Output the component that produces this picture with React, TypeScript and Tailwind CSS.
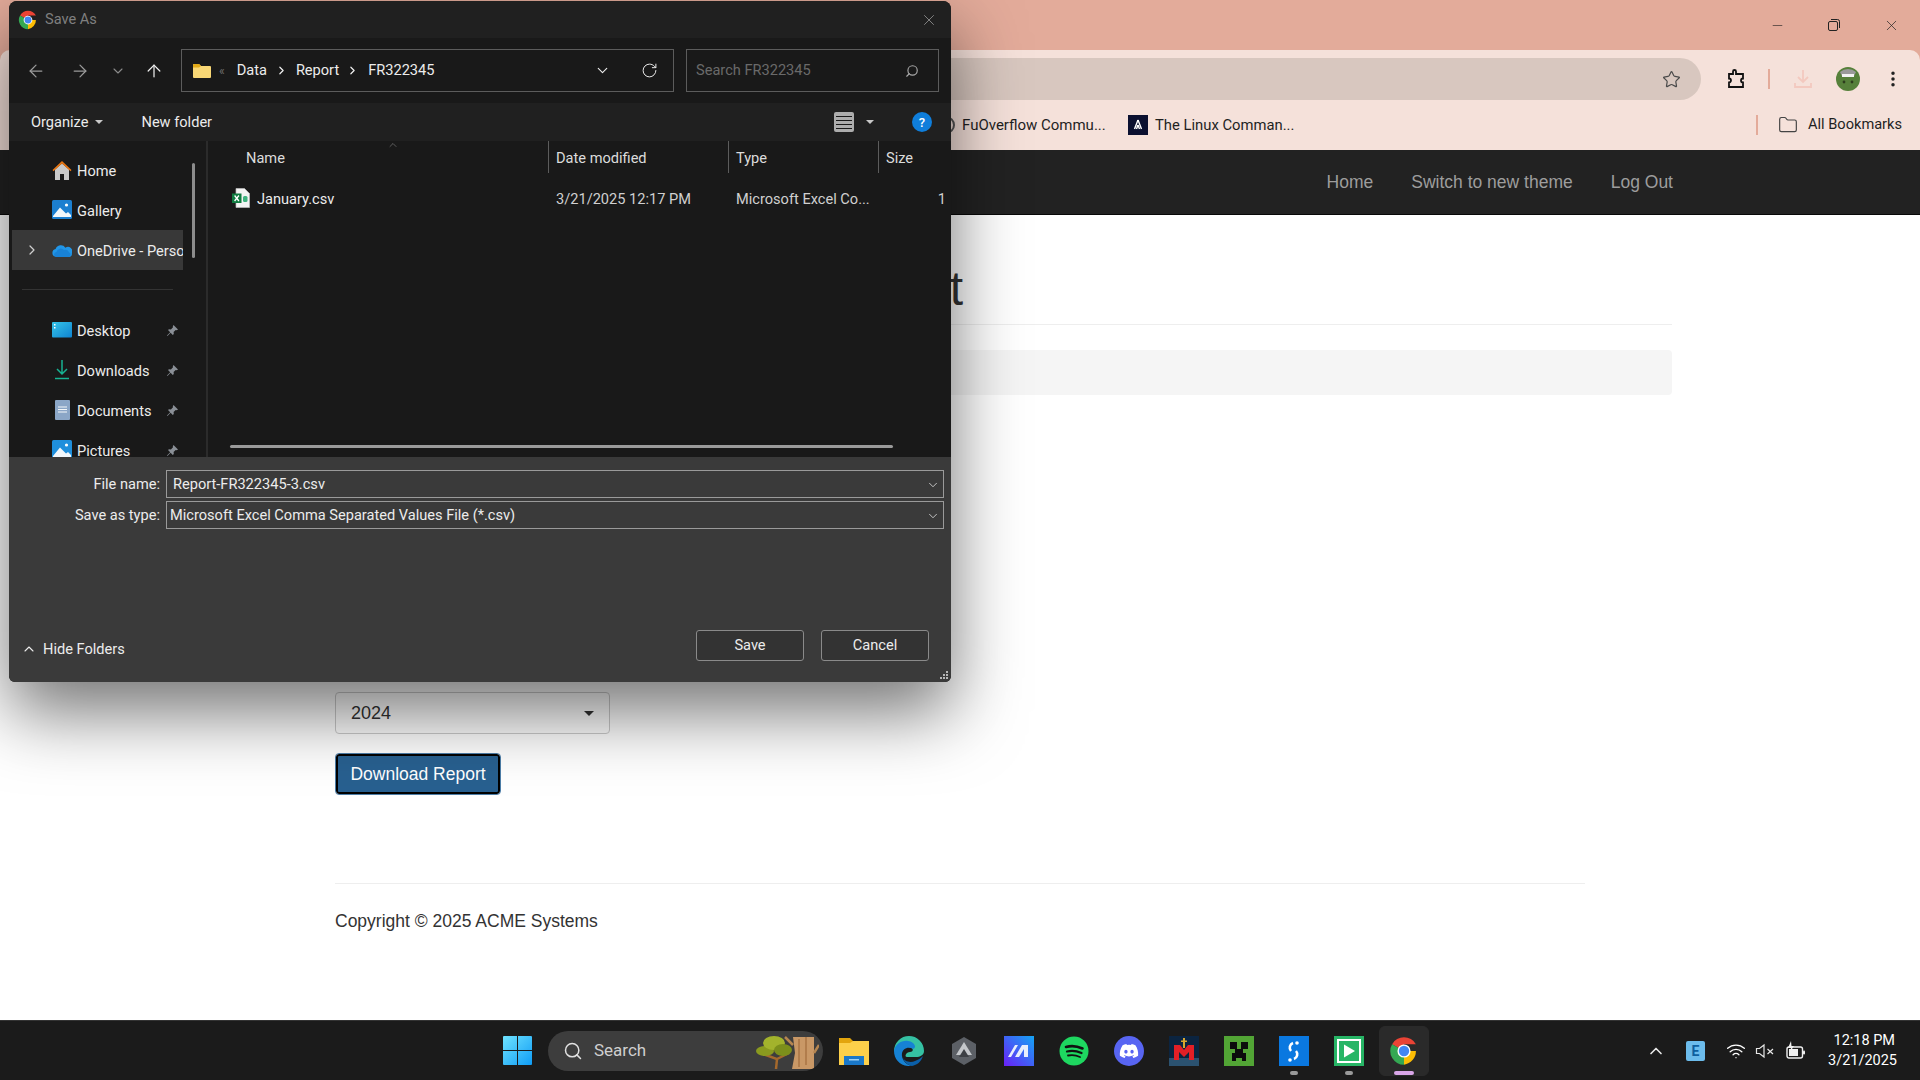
import { ArrowLeft, ArrowRight, ArrowUp, ChevronDown, ChevronRight, ChevronUp, Folder, Minus, MoreVertical, RotateCw, Search, Star, Wifi, X } from "lucide-react";
import { FaDiscord } from "react-icons/fa";

function ChromeLogo({ size }: { size: number }) {
  return (
    <svg width={size} height={size} viewBox="0 0 48 48" className="shrink-0">
      <path d="M24 24L4.95 13A22 22 0 0 1 43.05 13H24Z" fill="#ea4335" />
      <path d="M24 24L4.95 13A22 22 0 0 0 24 46Z" fill="#34a853" />
      <path d="M24 24H43.05A22 22 0 0 1 24 46Z" fill="#fbbc04" />
      <circle cx="24" cy="24" r="10.5" fill="#fff" />
      <circle cx="24" cy="24" r="8.3" fill="#4285f4" />
    </svg>
  );
}

function PinIcon() {
  return (
    <svg width="13" height="13" viewBox="0 0 13 13" className="shrink-0">
      <path d="M7.5 1L12 5.5L10.8 6.2L9.7 6L7.6 8.1L7.8 10L6.8 11L4.6 8.7L1.5 12L1 11.5L4.2 8.3L2 6.1L3 5.2L4.9 5.4L7 3.3L6.8 2.2Z" fill="#8a8f96" />
    </svg>
  );
}

function HomeIcon() {
  return (
    <svg width="20" height="20" viewBox="0 0 20 20">
      <path d="M3 9.5L10 3.5L17 9.5V20H12V14H8V20H3Z" fill="#c9c9c9" />
      <path d="M0.5 10L10 1L19.5 10L18.5 11.3L10 3.6L1.5 11.3Z" fill="#e87511" />
    </svg>
  );
}

function GalleryIcon({ clip }: { clip?: boolean }) {
  return (
    <svg width="20" height="20" viewBox="0 0 20 20">
      <rect x="0" y="0" width="20" height="19" rx="1.5" fill={clip ? "#1f8fdc" : "#1c7fd0"} />
      <circle cx="14.5" cy="5" r="1.6" fill="#fff" />
      <path d="M1 16L8 7.5L14 13.5L16 12L19 15V17H1Z" fill="#f2f7fb" />
    </svg>
  );
}

function CloudIcon() {
  return (
    <svg width="20" height="13" viewBox="0 0 20 13">
      <path d="M4 13A4 4 0 0 1 3.6 5.1A5.5 5.5 0 0 1 13.4 3.7A4.4 4.4 0 0 1 19.9 9.2A3.4 3.4 0 0 1 17 13Z" fill="#2196e8" />
      <path d="M4 13A2.6 2.6 0 0 1 4.4 7.9A4.4 4.4 0 0 1 12 6A3.6 3.6 0 0 1 17 8.2A2.6 2.6 0 0 1 17 13Z" fill="#1273c9" opacity="0.55" />
    </svg>
  );
}

function DesktopIcon() {
  return (
    <svg width="20" height="16" viewBox="0 0 20 16">
      <defs>
        <linearGradient id="desk" x1="0" y1="0" x2="1" y2="1">
          <stop offset="0" stopColor="#35c4e8" />
          <stop offset="1" stopColor="#0f83d0" />
        </linearGradient>
      </defs>
      <rect width="20" height="15.5" rx="1" fill="url(#desk)" />
      <rect x="2" y="2" width="1.5" height="1.5" fill="#fff" />
      <rect x="2" y="5" width="1.5" height="1.5" fill="#fff" />
    </svg>
  );
}

function DownloadsIcon() {
  return (
    <svg width="16" height="20" viewBox="0 0 16 20" fill="none" stroke="#17b393" strokeWidth="1.5">
      <path d="M8 0V13.5M3 9L8 14L13 9" />
      <path d="M1 18.5H15" />
    </svg>
  );
}

function DocumentsIcon() {
  return (
    <svg width="15" height="20" viewBox="0 0 15 20">
      <rect width="15" height="20" rx="1" fill="#8ba6c7" />
      <path d="M3 7H12M3 9.5H12M3 12H12" stroke="#f4f7fa" strokeWidth="1" />
    </svg>
  );
}

function ExcelFile() {
  return (
    <svg width="18" height="20" viewBox="0 0 18 20" className="shrink-0">
      <path d="M4 0.5H12.5L17.5 5.5V19.5H4Z" fill="#f3f3f3" stroke="#bdbdbd" strokeWidth="0.7" />
      <rect x="0" y="5.5" width="9.5" height="9.5" fill="#107c41" />
      <path d="M2.6 7.5L6.9 13M6.9 7.5L2.6 13" stroke="#fff" strokeWidth="1.3" />
      <rect x="11" y="8" width="4.5" height="6" rx="1.5" fill="#3fb27f" />
    </svg>
  );
}

function SideRow({ icon, label, pinned, selected, expandable }: { icon: React.ReactNode; label: string; pinned?: boolean; selected?: boolean; expandable?: boolean }) {
  return (
    <div className={`ml-[3px] flex h-10 w-[171px] items-center overflow-hidden ${selected ? "bg-[#383838]" : ""}`}>
      <div className="flex w-[40px] shrink-0 justify-center">
        {expandable && <ChevronRight size={16} strokeWidth={1.8} className="text-[#d0d0d0]" />}
      </div>
      <div className="flex w-5 shrink-0 justify-center">{icon}</div>
      <span className="ml-[5px] mt-[3px] whitespace-nowrap">{label}</span>
      {pinned && (
        <span className="ml-auto mr-[4px]">
          <PinIcon />
        </span>
      )}
    </div>
  );
}

function SaveAsDialog() {
  return (
    <div className="absolute left-[9px] top-[1px] flex h-[681px] w-[942px] flex-col overflow-hidden rounded-t-lg rounded-b-md bg-[#191919] font-['Roboto',sans-serif] text-[14.6px] text-[#ececec] shadow-[0_30px_70px_rgba(0,0,0,0.55)]">
      <div className="flex h-[37px] shrink-0 items-center bg-[#202020] pl-[9px] pr-[13px]">
        <ChromeLogo size={20} />
        <span className="ml-[7px] text-[#7f7f7f]">Save As</span>
        <X size={18} strokeWidth={1} className="ml-auto text-[#a0a0a0]" />
      </div>

      <div className="flex h-[65px] shrink-0 items-center">
        <ArrowLeft size={20} strokeWidth={1.5} className="ml-[17px] text-[#9a9a9a]" />
        <ArrowRight size={20} strokeWidth={1.5} className="ml-[24px] text-[#9a9a9a]" />
        <ChevronDown size={16} strokeWidth={1.6} className="ml-[20px] text-[#8a8a8a]" />
        <ArrowUp size={20} strokeWidth={1.5} className="ml-[18px] text-[#ececec]" />
        <div className="ml-[17px] flex h-[43px] w-[493px] items-center border border-[#5c5c5c] pl-[11px]">
          <svg width="18" height="14" viewBox="0 0 18 14">
            <path d="M0 1A1 1 0 0 1 1 0H6L8 2H17A1 1 0 0 1 18 3V13A1 1 0 0 1 17 14H1A1 1 0 0 1 0 13Z" fill="#f8d775" />
            <path d="M0 1A1 1 0 0 1 1 0H6L8 2L6 3.5H0Z" fill="#e2a917" />
          </svg>
          <span className="ml-[8px] text-[12px] leading-none text-[#6e6e6e]">«</span>
          <span className="ml-[12px]">Data</span>
          <ChevronRight size={13} strokeWidth={2.2} className="ml-[8px] text-[#f0f0f0]" />
          <span className="ml-[8px]">Report</span>
          <ChevronRight size={13} strokeWidth={2.2} className="ml-[7px] text-[#f0f0f0]" />
          <span className="ml-[9px]">FR322345</span>
          <ChevronDown size={17} strokeWidth={1.6} className="ml-auto" />
          <RotateCw size={17} strokeWidth={1.4} className="ml-[30px] mr-[15px]" />
        </div>
        <div className="ml-[12px] flex h-[43px] w-[253px] items-center border border-[#5c5c5c] pl-[9px] pr-[19px] text-[#6a6a6a]">
          <span>Search FR322345</span>
          <Search size={14} strokeWidth={2} className="ml-auto -scale-x-100 text-[#a8a8a8]" />
        </div>
      </div>

      <div className="flex h-[38px] shrink-0 items-center bg-[#202020] pl-[22px] pr-[19px]">
        <span className="mt-[2px]">Organize</span>
        <span className="ml-[7px] h-0 w-0 border-x-[4px] border-t-[4px] border-x-transparent border-t-[#c8c8c8]" />
        <span className="ml-[38px] mt-[2px]">New folder</span>
        <div className="ml-auto flex h-5 w-5 flex-col justify-center gap-[3px] rounded-[2px] bg-[#adadad] px-[2px]">
          <span className="h-px bg-[#1a1a1a]" />
          <span className="h-px bg-[#1a1a1a]" />
          <span className="h-px bg-[#1a1a1a]" />
          <span className="h-px bg-[#1a1a1a]" />
        </div>
        <span className="ml-[12px] h-0 w-0 border-x-[4px] border-t-[4px] border-x-transparent border-t-[#c8c8c8]" />
        <span className="ml-[38px] flex h-5 w-5 items-center justify-center rounded-full bg-[#0f7edb] text-[13px] font-medium leading-none text-white">?</span>
      </div>

      <div className="flex h-[316px] shrink-0">
        <div className="relative w-[199px] shrink-0 overflow-hidden border-r-2 border-[#2b2b2b] pt-[9px]">
          <SideRow icon={<HomeIcon />} label="Home" />
          <SideRow icon={<GalleryIcon />} label="Gallery" />
          <SideRow icon={<CloudIcon />} label="OneDrive - Personal" selected expandable />
          <div className="ml-[13px] mb-[20px] mt-[19px] h-px w-[151px] bg-[#333]" />
          <SideRow icon={<DesktopIcon />} label="Desktop" pinned />
          <SideRow icon={<DownloadsIcon />} label="Downloads" pinned />
          <SideRow icon={<DocumentsIcon />} label="Documents" pinned />
          <SideRow icon={<GalleryIcon clip />} label="Pictures" pinned />
          <div className="absolute left-[183px] top-[22px] h-[95px] w-[3px] rounded-full bg-[#8c8c8c]" />
        </div>

        <div className="relative min-w-0 flex-1 overflow-hidden">
          <div className="grid h-[32px] grid-cols-[340px_180px_150px_1fr] items-stretch text-[#dcdcdc]">
            <div className="relative flex items-center pl-[38px] pt-[4px]">
              Name
              <ChevronUp size={12} strokeWidth={1} className="absolute left-[179px] top-[-2px] text-[#a0a0a0]" />
            </div>
            <div className="flex items-center border-l border-[#5c5c5c] pl-[7px] pt-[4px]">Date modified</div>
            <div className="flex items-center border-l border-[#5c5c5c] pl-[7px] pt-[4px]">Type</div>
            <div className="flex items-center border-l border-[#5c5c5c] pl-[7px] pt-[4px]">Size</div>
          </div>
          <div className="mt-[10px] grid h-[30px] grid-cols-[340px_180px_150px_1fr] items-center pt-[3px] text-[#d0d0d0]">
            <div className="flex items-center gap-[7px] pl-[24px] text-[#ececec]">
              <span className="-mt-[3px]">
                <ExcelFile />
              </span>
              January.csv
            </div>
            <div className="pl-[8px]">3/21/2025 12:17 PM</div>
            <div className="pl-[8px]">Microsoft Excel Co...</div>
            <div className="pr-[5px] text-right">1</div>
          </div>
          <div className="absolute bottom-[9px] left-[22px] h-[3px] w-[663px] rounded-full bg-[#9a9a9a]" />
        </div>
      </div>

      <div className="flex flex-1 flex-col bg-[#3a3a3a] pt-[13px]">
        <div className="flex h-[28px] items-center">
          <span className="mt-[2px] w-[151px] text-right">File name:</span>
          <div className="ml-[6px] flex h-[28px] w-[778px] items-center border border-[#9a9a9a] pl-[6px] pr-[3px] pt-[2px]">
            Report-FR322345-3.csv
            <ChevronDown size={14} strokeWidth={1.3} className="ml-auto" />
          </div>
        </div>
        <div className="mt-[3px] flex h-[28px] items-center">
          <span className="mt-[2px] w-[151px] text-right">Save as type:</span>
          <div className="ml-[6px] flex h-[28px] w-[778px] items-center border border-[#9a9a9a] pl-[3px] pr-[3px] pt-[2px]">
            Microsoft Excel Comma Separated Values File (*.csv)
            <ChevronDown size={14} strokeWidth={1.3} className="ml-auto" />
          </div>
        </div>
        <div className="mt-auto flex items-center pb-[21px] pl-[12px] pr-[22px]">
          <ChevronUp size={16} strokeWidth={1.6} className="mt-[7px]" />
          <span className="ml-[6px] mt-[8px]">Hide Folders</span>
          <button className="ml-auto h-[31px] w-[108px] rounded-[3px] border border-[#8a8a8a] bg-[#333]">Save</button>
          <button className="ml-[17px] h-[31px] w-[108px] rounded-[3px] border border-[#8a8a8a] bg-[#333]">Cancel</button>
        </div>
      </div>

      <div className="absolute bottom-[3px] right-[3px] grid grid-cols-3 gap-px">
        <span className="col-start-3 h-[2px] w-[2px] bg-[#b5b5b5]" />
        <span className="col-start-2 h-[2px] w-[2px] bg-[#b5b5b5]" />
        <span className="h-[2px] w-[2px] bg-[#b5b5b5]" />
        <span className="h-[2px] w-[2px] bg-[#b5b5b5]" />
        <span className="h-[2px] w-[2px] bg-[#b5b5b5]" />
        <span className="h-[2px] w-[2px] bg-[#b5b5b5]" />
      </div>
    </div>
  );
}

function BrowserChrome() {
  return (
    <div className="shrink-0 bg-[#e3ab9a]">
      <div className="flex h-[50px] items-center justify-end text-[#222]">
        <Minus size={15} strokeWidth={1} className="mr-[42px]" />
        <svg width="14" height="14" viewBox="0 0 14 14" fill="none" stroke="#222" className="mr-[42px]">
          <rect x="1.5" y="3.5" width="9" height="9" rx="1.5" />
          <path d="M4 1.5H10.5A2 2 0 0 1 12.5 3.5V10" />
        </svg>
        <X size={17} strokeWidth={1} className="mr-[20px]" />
      </div>
      <div className="rounded-t-[10px] bg-[#f5e1da]">
        <div className="flex h-[50px] items-end">
          <div className="ml-[101px] flex h-[42px] w-[1600px] items-center justify-end rounded-full bg-[#d8c7bf] pr-[20px]">
            <Star size={19} strokeWidth={1.5} className="text-[#4a4a4a]" />
          </div>
          <div className="flex h-[42px] items-center">
            <svg width="20" height="20" viewBox="0 0 20 20" fill="none" stroke="#111" strokeWidth="1.8" className="ml-[25px]">
              <path d="M3 5H7V2.5A1.5 1.5 0 0 1 10 2.5V5H17V9.5A2 2 0 0 0 17 13.5V18H3V13.5A2 2 0 0 0 3 9.5Z" />
            </svg>
            <span className="ml-[22px] h-[20px] w-[2px] bg-[#e3ab9a]" />
            <svg width="20" height="20" viewBox="0 0 20 20" fill="none" stroke="#f3c9bf" strokeWidth="1.8" className="ml-[23px]">
              <path d="M10 1V13M5 8L10 13L15 8M2 14V18H18V14" />
            </svg>
            <svg width="24" height="24" viewBox="0 0 24 24" className="ml-[23px]">
              <circle cx="12" cy="12" r="12" fill="#56803a" />
              <path d="M4 5A12 12 0 0 1 20 5L18 9H6Z" fill="#9a9a9a" />
              <rect x="6" y="7" width="12" height="3" fill="#f2f2f2" />
              <circle cx="8" cy="15" r="1.4" fill="#2d3d1d" />
              <circle cx="16" cy="15" r="1.4" fill="#2d3d1d" />
            </svg>
            <MoreVertical size={20} strokeWidth={2.2} className="ml-[23px] text-[#222]" />
          </div>
        </div>
        <div className="flex h-[50px] items-center text-[14.8px] text-[#1f1f1f] font-['Roboto',sans-serif]">
          <span className="ml-[937px] h-[18px] w-[18px] rounded-full border-2 border-[#555]" />
          <span className="ml-[7px] w-[143px] whitespace-nowrap text-[15px]">FuOverflow Commu...</span>
          <span className="ml-[23px] flex h-5 w-5 items-center justify-center bg-[#0b1030]">
            <svg width="12" height="14" viewBox="0 0 12 14" fill="none" stroke="#fff" strokeWidth="1.4">
              <path d="M6 2L2.5 11M6 2L9.5 11M6 7L4.5 11M6 7L7.5 11" />
            </svg>
          </span>
          <span className="ml-[7px] whitespace-nowrap">The Linux Comman...</span>
          <span className="ml-auto h-[20px] w-[2px] bg-[#e3ab9a]" />
          <Folder size={20} strokeWidth={1.4} className="ml-[20px] text-[#444]" />
          <span className="ml-[10px] mr-[18px] text-[14.6px]">All Bookmarks</span>
        </div>
      </div>
    </div>
  );
}

function Taskbar() {
  return (
    <div className="flex h-[60px] shrink-0 items-center border-t border-[#333] bg-[#1b1b1b] pl-[503px] font-['Roboto',sans-serif] text-white">
      <svg width="29" height="29" viewBox="0 0 29 29" className="shrink-0">
        <defs>
          <linearGradient id="win" x1="0" y1="0" x2="1" y2="1">
            <stop offset="0" stopColor="#6fe3ff" />
            <stop offset="1" stopColor="#0f9cf5" />
          </linearGradient>
        </defs>
        <path d="M0 1A1 1 0 0 1 1 0H14V14H0ZM15 0H28A1 1 0 0 1 29 1V14H15ZM0 15H14V29H1A1 1 0 0 1 0 28ZM15 15H29V28A1 1 0 0 1 28 29H15Z" fill="url(#win)" />
      </svg>

      <div className="ml-[16px] flex h-[40px] w-[275px] items-center overflow-hidden rounded-full bg-[#3d3d3d] pl-[15px] text-[17px] text-[#cfcfcf]">
        <Search size={20} strokeWidth={1.8} className="text-[#e0e0e0]" />
        <span className="ml-[11px]">Search</span>
        <svg width="64" height="36" viewBox="0 0 64 36" className="ml-auto mr-[4px]">
          <path d="M21 36L22 26L8 21M22 26L34 20" stroke="#a5692c" strokeWidth="2.5" fill="none" />
          <ellipse cx="10" cy="18" rx="9" ry="5" fill="#8a9a1f" />
          <ellipse cx="19" cy="10" rx="11" ry="7" fill="#a3b32c" />
          <ellipse cx="28" cy="17" rx="9" ry="6" fill="#7c8f1b" />
          <path d="M38 4H59V36H37L40 20Z" fill="#c99866" />
          <path d="M44 6V34M51 4V32" stroke="#a97444" strokeWidth="1.5" />
          <path d="M38 12L30 4M59 20L64 12" stroke="#b58550" strokeWidth="2.5" />
        </svg>
      </div>

      <div className="ml-[16px] flex items-center gap-[25px]">
        <svg width="30" height="28" viewBox="0 0 30 28" className="shrink-0">
          <path d="M0 1H11L14 4H30V28H0Z" fill="#e3a50d" />
          <path d="M0 6H11L14 4H30V28H0Z" fill="#fdd04a" />
          <rect x="5" y="19" width="20" height="9" fill="#1a78c9" />
          <rect x="10" y="22" width="10" height="1.5" fill="#9cd0f5" />
        </svg>
        <svg width="30" height="30" viewBox="0 0 30 30" className="shrink-0">
          <path d="M15 0A15 15 0 0 1 30 15C30 19 26 21 22 21H13C10 21 12 16 16 16C20 16 20 11 14 11C7 11 3 17 0 15A15 15 0 0 1 15 0Z" fill="#35c1a3" />
          <path d="M0 15C1 8 8 4 14 5C21 6 23 12 19 13C14 10 7 13 8 20C8.5 25 13 29 18 30C7 31 0 24 0 15Z" fill="#1682d4" />
          <path d="M18 30C13 29 9 25 9 20C9 26 17 27 21 25C24 24 27 22 29 20C27 26 23 29 18 30Z" fill="#0b5fa8" />
        </svg>
        <svg width="30" height="30" viewBox="0 0 30 30" className="shrink-0">
          <path d="M15 1L27 8V22L15 29L3 22V8Z" fill="#5c6066" />
          <path d="M15 6L23 19H7Z" fill="#c4c7cb" />
          <path d="M15 13L20 21H10Z" fill="#3d4045" />
        </svg>
        <svg width="30" height="30" viewBox="0 0 30 30" className="shrink-0">
          <defs>
            <linearGradient id="meta" x1="1" y1="0" x2="0" y2="1">
              <stop offset="0" stopColor="#14a5f5" />
              <stop offset="1" stopColor="#6a20f7" />
            </linearGradient>
          </defs>
          <rect width="30" height="30" fill="url(#meta)" />
          <path d="M4 21L11 9H14L7 21ZM11 21L18 9H24V21H20V13L15 21Z" fill="#e8eefc" />
        </svg>
        <svg width="30" height="30" viewBox="0 0 30 30" fill="none" stroke="#111" strokeLinecap="round" className="shrink-0">
          <circle cx="15" cy="15" r="14.5" fill="#1ed760" stroke="none" />
          <path d="M7 11C12 9.5 18 10 23.5 12.5" strokeWidth="2.6" />
          <path d="M8 15.5C12 14.5 18 15 22.5 17" strokeWidth="2.2" />
          <path d="M9 19.5C12.5 18.8 17 19 21 21" strokeWidth="1.8" />
        </svg>
        <span className="flex h-[30px] w-[30px] shrink-0 items-center justify-center rounded-full bg-[#5865f2]">
          <FaDiscord size={20} className="text-white" />
        </span>
        <svg width="30" height="30" viewBox="0 0 30 30" className="shrink-0">
          <rect width="30" height="30" fill="#0b2440" />
          <rect y="22" width="30" height="8" fill="#2b5270" />
          <path d="M5 9H11L15 14L19 9H25V24H20V16L15 21L10 16V24H5Z" fill="#e21f26" />
          <rect x="14" y="2" width="2" height="10" fill="#d9a62e" />
          <rect x="12" y="4.5" width="6" height="1.5" fill="#d9a62e" />
        </svg>
        <svg width="30" height="30" viewBox="0 0 30 30" className="shrink-0">
          <rect width="30" height="30" fill="#52a535" />
          <path d="M6 6H13V13H17V6H24V13H19V17H22V25H18V22H12V25H8V17H11V13H6Z" fill="#0c0c0c" />
        </svg>
        <div className="relative h-[30px] w-[30px] shrink-0">
          <svg width="30" height="30" viewBox="0 0 30 30">
            <rect width="30" height="30" fill="#0a78e0" />
            <path d="M14 7A5 5 0 0 0 12 15M17 15A5 5 0 0 1 15 23" stroke="#fff" strokeWidth="2.6" fill="none" />
            <circle cx="18" cy="7" r="1.8" fill="#fff" />
            <circle cx="11" cy="24" r="1.8" fill="#fff" />
          </svg>
          <span className="absolute -bottom-[9px] left-[11px] h-[4px] w-2 rounded-full bg-[#9a9a9a]" />
        </div>
        <div className="relative h-[30px] w-[30px] shrink-0">
          <svg width="30" height="30" viewBox="0 0 30 30">
            <rect width="30" height="30" fill="#27b566" />
            <rect x="3" y="3" width="24" height="24" fill="#fff" />
            <rect x="5" y="5" width="20" height="20" fill="#27b566" />
            <path d="M10 8.5L21 15L10 21.5Z" fill="#fff" />
          </svg>
          <span className="absolute -bottom-[9px] left-[11px] h-[4px] w-2 rounded-full bg-[#9a9a9a]" />
        </div>
        <div className="relative h-[30px] w-[30px] shrink-0">
          <span className="absolute -inset-[10px] rounded-md border border-[#2a2a2a] bg-[#2a2a2a]" />
          <span className="relative block">
            <ChromeLogo size={30} />
          </span>
          <span className="absolute -bottom-[9px] left-[5px] h-[4px] w-5 rounded-full bg-[#d9a6e8]" />
        </div>
      </div>

      <div className="ml-auto flex items-center pr-[25px]">
        <ChevronUp size={20} strokeWidth={2} className="text-[#e8e8e8]" />
        <span className="ml-[20px] flex h-5 w-[19px] items-center justify-center rounded-[2px] bg-[#6cbcec] text-[14px] font-bold leading-none text-[#0f5f9e]">E</span>
        <Wifi size={20} strokeWidth={1.6} className="ml-[21px]" />
        <svg width="20" height="20" viewBox="0 0 20 20" fill="none" stroke="#e8e8e8" strokeWidth="1.2" className="ml-[9px]">
          <path d="M1.5 7.5V12.5H4.5L9 16V4L4.5 7.5Z" />
          <path d="M12.5 8L18 13M18 8L12.5 13" />
        </svg>
        <svg width="20" height="20" viewBox="0 0 20 20" className="ml-[11px]">
          <rect x="1" y="6" width="15.5" height="11" rx="2" fill="none" stroke="#f0f0f0" strokeWidth="1.4" />
          <rect x="3" y="8" width="9" height="7" fill="#f0f0f0" />
          <rect x="17" y="9.5" width="2" height="4" rx="1" fill="#f0f0f0" />
          <path d="M5 0L2 7H5L4 11L8 5H5.5Z" fill="#f0f0f0" />
        </svg>
        <div className="ml-[22px] w-[67px] text-right text-[14.5px] leading-[20px] whitespace-nowrap">
          <div>12:18 PM</div>
          <div>3/21/2025</div>
        </div>
      </div>
    </div>
  );
}

export default function App() {
  return (
    <div className="relative flex h-[1080px] w-[1920px] flex-col overflow-hidden bg-white font-['Liberation_Sans',Arial,sans-serif] text-[17.5px] text-[#333]">
      <BrowserChrome />

      <nav className="flex h-[65px] shrink-0 items-center justify-end gap-[38px] border-b border-[#080808] bg-[#222] pr-[247px] text-[#9d9d9d]">
        <a>Home</a>
        <a>Switch to new theme</a>
        <a>Log Out</a>
      </nav>

      <main className="min-h-0 flex-1 pl-[335px]">
        <h1 className="mt-[47px] w-[628px] text-right text-[48px] leading-[53px]">Report</h1>
        <div className="mt-[9px] w-[1337px] border-b border-[#eee]" />
        <div className="mt-[25px] h-[45px] w-[1337px] rounded bg-[#f5f5f5]" />
        <div className="relative mt-[297px] flex h-[42px] w-[275px] items-center rounded border border-[#ccc] bg-white pl-[15px] text-[18px]">
          2024
          <span className="absolute right-[15px] top-[18px] h-0 w-0 border-x-[5px] border-t-[5px] border-x-transparent border-t-[#333]" />
        </div>
        <button className="mt-[20px] ml-[1px] block h-[40px] w-[164px] rounded-[3px] border-2 border-black bg-[#286090] text-white outline outline-1 outline-offset-0 outline-[#4d7ea8]">
          Download Report
        </button>
        <div className="mt-[89px] w-[1250px] border-b border-[#eee]" />
        <p className="mt-[24px]">Copyright © 2025 ACME Systems</p>
      </main>

      <Taskbar />
      <SaveAsDialog />
    </div>
  );
}
